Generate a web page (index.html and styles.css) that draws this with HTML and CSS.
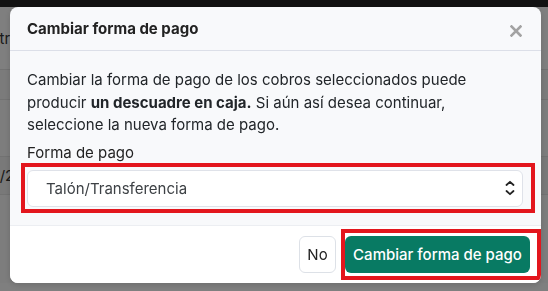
FILE: index.html
```html
<!DOCTYPE html>
<html lang="es">
<head>
    <meta charset="UTF-8">
    <meta name="viewport" content="width=device-width, initial-scale=1.0">
    <title>Cambiar forma de pago</title>
    <link rel="stylesheet" href="styles.css">
</head>
<body>
    <!-- pagina de fondo (tabla de cobros) -->
    <div class="page">
        <div class="topbar"></div>
        <div class="table">
            <div class="row row-head"><span class="cell">Extra</span></div>
            <div class="row row-a"></div>
            <div class="row row-b"></div>
            <div class="row row-c"><span class="cell">07/2</span></div>
            <div class="row row-d"></div>
        </div>
    </div>

    <div class="backdrop">
        <div class="modal">
            <div class="modal-header">
                <h5 class="modal-title">Cambiar forma de pago</h5>
                <button class="btn-close" aria-label="Cerrar">
                    <svg width="12" height="12" viewBox="0 0 12 12">
                        <path d="M1.5 1.5 L10.5 10.5 M10.5 1.5 L1.5 10.5" stroke="#a3a3a3" stroke-width="2.6" stroke-linecap="square"/>
                    </svg>
                </button>
            </div>
            <div class="modal-body">
                <p>Cambiar la forma de pago de los cobros seleccionados puede producir <strong>un descuadre en caja.</strong> Si aún así desea continuar, seleccione la nueva forma de pago.</p>
                <label class="form-label" for="forma-pago">Forma de pago</label>
                <div class="select-wrap">
                    <select id="forma-pago" class="form-select">
                        <option>Talón/Transferencia</option>
                        <option>Efectivo</option>
                        <option>Tarjeta</option>
                    </select>
                    <svg class="select-arrows" width="10" height="16" viewBox="0 0 10 16">
                        <path d="M1.5 5 L5 1.8 L8.5 5 M1.5 11 L5 14.2 L8.5 11" fill="none" stroke="#222" stroke-width="1.8" stroke-linecap="round" stroke-linejoin="round"/>
                    </svg>
                    <span class="mark mark-select"></span>
                </div>
            </div>
            <div class="modal-footer">
                <button class="btn btn-light">No</button>
                <div class="btn-wrap">
                    <button class="btn btn-green">Cambiar forma de pago</button>
                    <span class="mark mark-btn"></span>
                </div>
            </div>
        </div>
    </div>
</body>
</html>
```

FILE: styles.css
```css
* { box-sizing: border-box; }

body {
    margin: 0;
    font-family: Inter, "Noto Sans", Arial, sans-serif;
    font-size: 15px;
    color: #212529;
    background: #fff;
    overflow: hidden;
}

/* fondo */
.page {
    height: 291px;
}
.topbar {
    height: 7px;
    background: #252525;
}
.table {
    display: flex;
    flex-direction: column;
}
.row {
    border-bottom: 1px solid #e4e4e4;
    display: flex;
    align-items: center;
    background: #fff;
}
.row-head { height: 63px; }
.row-a { height: 30px; background: #f6f6f6; }
.row-b { height: 57px; background: #fbfbfb; }
.row-c { height: 38px; background: #f2f2f2; }
.row-d { height: 88px; background: #fbfbfb; border-bottom: none; }
.cell {
    margin-left: -18px;
    font-size: 15px;
    color: #333;
}

.backdrop {
    position: fixed;
    inset: 0;
    background: rgba(0, 0, 0, 0.5);
    padding: 7px 7px 0 10px;
}

.modal {
    width: 531px;
    background: #f8f9fb;
    border-radius: 8px;
    overflow: hidden;
    box-shadow: 0 2px 6px rgba(0, 0, 0, 0.15);
}

.modal-header {
    height: 44px;
    padding: 0 19px 0 17px;
    display: flex;
    align-items: center;
    justify-content: space-between;
    border-bottom: 1px solid #dcdfe8;
}
.modal-title {
    margin: 0;
    font-size: 15px;
    font-weight: 700;
    color: #222;
}
.btn-close {
    border: none;
    background: none;
    padding: 0;
    width: 12px;
    height: 12px;
    margin-top: 5px;
    cursor: pointer;
    display: flex;
}

.modal-body {
    padding: 18px 18px 18px 17px;
}
.modal-body p {
    margin: 0 0 5.5px;
    line-height: 22.5px;
}
.modal-body strong { font-weight: 700; }

.form-label {
    display: block;
    line-height: 22.5px;
    margin-bottom: 5.5px;
    color: #222;
}

.select-wrap {
    position: relative;
}
.form-select {
    display: block;
    width: 100%;
    height: 37px;
    appearance: none;
    -webkit-appearance: none;
    font-family: inherit;
    font-size: 15px;
    color: #3d4145;
    background: #fff;
    border: 1px solid #dfe2e9;
    border-radius: 6px;
    padding: 0 30px 0 18px;
}
.select-arrows {
    position: absolute;
    right: 8px;
    top: 10px;
    pointer-events: none;
}

.modal-footer {
    background: #fff;
    border-top: 1px solid #eceef2;
    padding: 10px 11px 10px 0;
    display: flex;
    justify-content: flex-end;
    gap: 9px;
}

.btn {
    height: 37px;
    font-family: inherit;
    font-size: 15px;
    border-radius: 6px;
    cursor: pointer;
}
.btn-light {
    width: 37px;
    padding: 0;
    background: #fff;
    color: #222;
    border: 1px solid #dde1e7;
}
.btn-wrap {
    position: relative;
}
.btn-green {
    width: 185px;
    padding: 0;
    background: #087a63;
    color: #fff;
    border: none;
    font-weight: 500;
}

/* recuadros rojos de anotacion */
.mark {
    position: absolute;
    border: 4px solid #e3161d;
    pointer-events: none;
}
.mark-select {
    left: -6px;
    top: -7px;
    right: -12px;
    bottom: -6px;
}
.mark-btn {
    left: -4px;
    top: -7px;
    right: -11px;
    bottom: -7px;
}
```
